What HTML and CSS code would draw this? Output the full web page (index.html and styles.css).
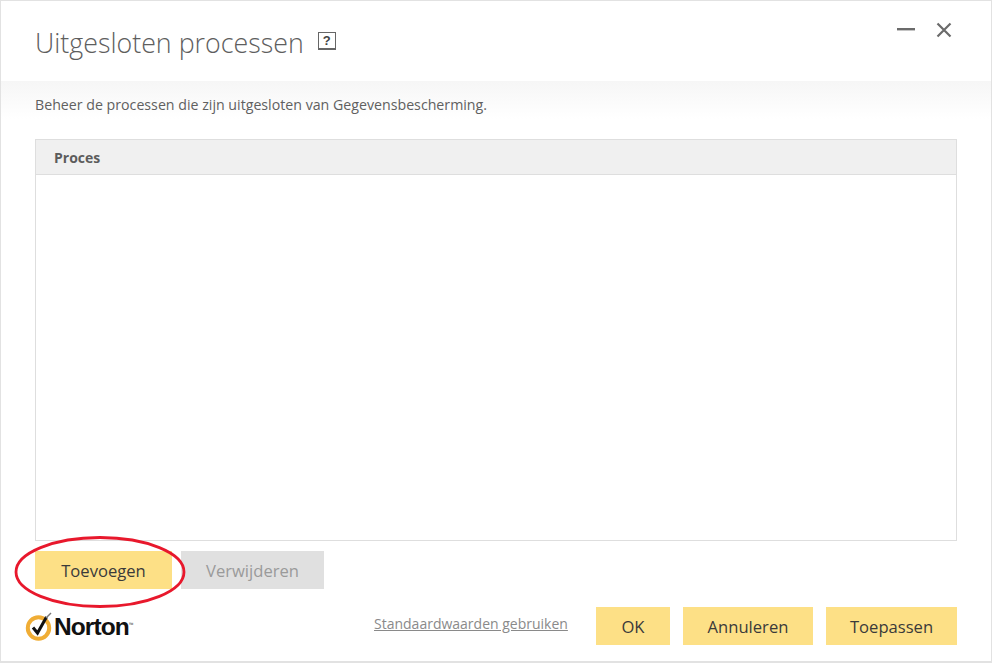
FILE: index.html
```html
<!DOCTYPE html>
<html lang="nl">
<head>
<meta charset="utf-8">
<title>Uitgesloten processen</title>
<link rel="stylesheet" href="styles.css">
</head>
<body>
<div class="window">
  <header class="head">
    <h1 class="title">Uitgesloten processen</h1>
    <span class="help">?</span>
    <div class="controls">
      <svg class="ctl" width="18" height="4" viewBox="0 0 18 4"><rect x="0" y="0" width="18" height="2.4" fill="#6b6b6b"/></svg>
      <svg class="ctl" width="16" height="16" viewBox="0 0 16 16"><path d="M1.5 1.5 L14.5 14.5 M14.5 1.5 L1.5 14.5" stroke="#6b6b6b" stroke-width="2.2" fill="none"/></svg>
    </div>
  </header>
  <div class="intro">Beheer de processen die zijn uitgesloten van Gegevensbescherming.</div>
  <section class="table">
    <div class="thead">Proces</div>
    <div class="tbody"></div>
  </section>
  <div class="actions">
    <button class="btn add">Toevoegen</button>
    <button class="btn disabled remove">Verwijderen</button>
  </div>
  <footer class="foot">
    <div class="logo">
      <svg width="30" height="30" viewBox="0 0 30 30">
        <circle cx="13.5" cy="16" r="10.7" fill="none" stroke="#f0ad35" stroke-width="4"/>
        <path d="M8 15.5 L12.5 21 L21.5 5" fill="none" stroke="#111" stroke-width="3"/>
        <path d="M21 6 L26 1" stroke="#777" stroke-width="1.4"/>
      </svg>
      <span class="brand">Norton</span><span class="tm">™</span>
    </div>
    <a class="defaults">Standaardwaarden gebruiken</a>
    <button class="btn ok">OK</button>
    <button class="btn cancel">Annuleren</button>
    <button class="btn apply">Toepassen</button>
  </footer>
  <svg class="circle" width="176" height="76" viewBox="0 0 176 76">
    <ellipse cx="87" cy="37" rx="84" ry="34.5" fill="none" stroke="#e8182c" stroke-width="2.8"/>
  </svg>
</div>
</body>
</html>
```
FILE: styles.css
```css
* { box-sizing: border-box; }
html, body { margin: 0; padding: 0; background: #fff; }
body { width: 993px; height: 663px; font-family: "Open Sans", "Noto Sans", sans-serif; }
.window {
  position: relative;
  width: 992px;
  height: 663px;
  border: 1px solid #e2e2e2;
  border-width: 1px 1px 2px 1px;
  background: #fff;
  display: flex;
  flex-direction: column;
}
.head {
  height: 80px;
  display: flex;
  align-items: flex-start;
  padding: 24px 0 0 34px;
}
.title {
  margin: 0;
  font-size: 26.8px;
  line-height: 36px;
  font-weight: 300;
  color: #5e5e5e;
}
.help {
  margin: 7px 0 0 14px;
  width: 18px;
  height: 18px;
  border: 1px solid #666;
  border-bottom-width: 2px;
  font-size: 13px;
  line-height: 15px;
  font-weight: 700;
  text-align: center;
  color: #444;
  font-family: "Liberation Sans", sans-serif;
}
.controls {
  margin-left: auto;
  margin-top: -3px;
  margin-right: 39px;
  display: flex;
  align-items: center;
  gap: 21px;
}
.controls .ctl { display: block; }
.intro {
  height: 58px;
  padding: 15px 0 0 34px;
  font-size: 14.2px;
  line-height: 18px;
  color: #606060;
  background: linear-gradient(#f6f6f6 0, #ffffff 38px);
}
.table {
  margin: 0 34px;
  width: 922px;
  height: 402px;
  border: 1px solid #dedede;
  display: flex;
  flex-direction: column;
}
.thead {
  height: 35px;
  background: #f0f0f0;
  border-bottom: 1px solid #dedede;
  padding-left: 18px;
  font-size: 14px;
  line-height: 35px;
  font-weight: 700;
  color: #5c5c5c;
}
.tbody { flex: 1; }
.actions {
  margin: 10px 0 0 34px;
  display: flex;
  gap: 9px;
}
.btn {
  height: 38px;
  padding: 0 0 0;
  border: 0;
  background: #fde086;
  color: #3a3a3a;
  font-family: inherit;
  font-size: 16.6px;
  line-height: 39px;
}
.btn.disabled { background: #e0e0e0; color: #9a9a9a; }
.add { width: 137px; }
.remove { width: 143px; }
.foot {
  margin-top: 18px;
  padding: 0 34px 0 24px;
  display: flex;
  align-items: center;
}
.logo { display: flex; align-items: center; width: 349px; padding-top: 2px; }
.brand {
  font-family: "Liberation Sans", sans-serif;
  font-weight: 700;
  font-size: 24.5px;
  letter-spacing: -0.9px;
  color: #111;
  margin-left: -1px;
}
.tm { font-size: 6px; color: #555; align-self: flex-start; margin-top: 9px; }
.defaults {
  width: 222px;
  margin-top: -6px;
  font-size: 14px;
  color: #8a8a8a;
  text-decoration: underline;
}
.ok { width: 74px; }
.cancel { width: 130px; margin-left: 13px; }
.apply { width: 131px; margin-left: 13px; }
.circle { position: absolute; left: 12px; top: 534px; pointer-events: none; }
```
